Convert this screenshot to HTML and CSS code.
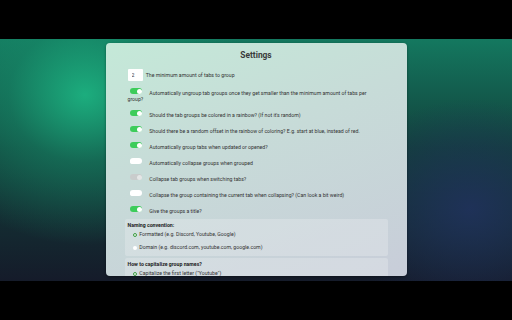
FILE: index.html
```html
<!DOCTYPE html>
<html lang="en">
<head>
    <meta charset="UTF-8">
    <meta name="viewport" content="width=device-width, initial-scale=1.0">
    <title>Settings</title>
    <link rel="stylesheet" href="styles.css">
</head>
<body>
    <div class="bar"></div>
    <div class="stage">
        <div class="panel">
            <h1>Settings</h1>
            <label class="row first">
                <input type="text" class="num" value="2"> The minimum amount of tabs to group
            </label>
            <label class="row">
                <input type="checkbox" class="switch" checked> Automatically ungroup tab groups once they get smaller than the minimum amount of tabs per group?
            </label>
            <label class="row">
                <input type="checkbox" class="switch" checked> Should the tab groups be colored in a rainbow? (If not it's random)
            </label>
            <label class="row">
                <input type="checkbox" class="switch" checked> Should there be a random offset in the rainbow of coloring? E.g. start at blue, instead of red.
            </label>
            <label class="row">
                <input type="checkbox" class="switch" checked> Automatically group tabs when updated or opened?
            </label>
            <label class="row">
                <input type="checkbox" class="switch"> Automatically collapse groups when grouped
            </label>
            <label class="row">
                <input type="checkbox" class="switch" checked disabled> Collapse tab groups when switching tabs?
            </label>
            <label class="row">
                <input type="checkbox" class="switch"> Collapse the group containing the current tab when collapsing? (Can look a bit weird)
            </label>
            <label class="row">
                <input type="checkbox" class="switch" checked> Give the groups a title?
            </label>

            <div class="box">
                <div class="legend">Naming convention:</div>
                <label class="opt"><input type="radio" name="naming" checked> Formatted (e.g. Discord, Youtube, Google)</label>
                <label class="opt"><input type="radio" name="naming"> Domain (e.g. discord.com, youtube.com, google.com)</label>
            </div>
            <div class="box">
                <div class="legend">How to capitalize group names?</div>
                <label class="opt"><input type="radio" name="caps" checked> Capitalize the first letter ("Youtube")</label>
                <label class="opt"><input type="radio" name="caps"> Keep it as it is ("youtube")</label>
            </div>
        </div>
    </div>
    <div class="bar"></div>
</body>
</html>
```

FILE: styles.css
```css
html, body {
    height: 100%;
}
body {
    margin: 0;
    background: #000;
    font-family: Roboto, "Liberation Sans", sans-serif;
    color: #333;
    display: flex;
    flex-direction: column;
}
.bar {
    height: 39px;
    background: #000;
    flex: none;
}
.stage {
    height: 242px;
    flex: none;
    background:
        radial-gradient(ellipse 170px 150px at 85px 56px, rgba(29, 182, 131, 0.9) 0%, rgba(23, 140, 105, 0.55) 45%, rgba(23, 110, 90, 0) 100%),
        radial-gradient(ellipse 130px 110px at 470px 170px, rgba(32, 50, 92, 0.9) 0%, rgba(30, 45, 80, 0) 100%),
        linear-gradient(to bottom, rgba(20, 125, 98, 0.95) 0%, rgba(16, 84, 68, 0.65) 45%, rgba(20, 26, 38, 0) 100%),
        #151b2a;
    overflow: hidden;
}
.panel {
    width: 301px;
    height: 233px;
    margin: 4px auto 0;
    box-sizing: border-box;
    padding: 7px 19px 0;
    border-radius: 4px;
    overflow: hidden;
    background: linear-gradient(160deg, #c4e9d8 0%, #c7dcd8 40%, #c8cdd9 100%);
    box-shadow: 0 1px 3px rgba(0, 0, 0, 0.4);
}
h1 {
    margin: 0 0 11px;
    font-size: 8.4px;
    line-height: 11px;
    text-align: center;
    color: #3a3a3a;
}
.row {
    display: block;
    padding: 0 9px 0 3px;
    font-size: 5.2px;
    line-height: 6px;
    margin-bottom: 10px;
}
.row.first {
    margin-bottom: 12px;
}
.num {
    width: 15px;
    height: 12px;
    box-sizing: border-box;
    margin: -3px 2px -3px 0;
    padding: 0 0 0 4px;
    border: none;
    border-radius: 1px;
    background: #fff;
    font: 5.2px Roboto, sans-serif;
    color: #333;
    vertical-align: top;
}
.switch {
    appearance: none;
    position: relative;
    width: 12.5px;
    height: 6px;
    margin: -2px 6px 0 2px;
    border-radius: 3px;
    background: #fff;
    vertical-align: top;
}
.switch::before {
    content: "";
    position: absolute;
    top: 0.5px;
    left: 0.5px;
    width: 5px;
    height: 5px;
    border-radius: 50%;
    background: #fff;
}
.switch:checked {
    background: #3dcc5b;
}
.switch:checked::before {
    left: 7px;
}
.switch:disabled {
    background: #c9cccc;
}
.switch:disabled::before {
    background: #e4e6e6;
}
.box {
    margin-bottom: 2px;
    padding: 3px 3px 6px;
    border-radius: 2px;
    background: rgba(235, 238, 242, 0.35);
}
.box:first-of-type {
    margin-top: -5px;
}
.legend {
    font-size: 5.2px;
    line-height: 6px;
    font-weight: bold;
    color: #222;
    margin-bottom: 3px;
}
.opt {
    display: block;
    font-size: 5.2px;
    line-height: 6px;
    margin-bottom: 7px;
    padding-left: 5px;
}
.opt:last-child {
    margin-bottom: 0;
}
.opt input {
    appearance: none;
    width: 4px;
    height: 4px;
    margin: 0 1.5px 0 0;
    border-radius: 50%;
    background: #fff;
    vertical-align: -1px;
}
.opt input:checked {
    border: 1px solid #3e9c44;
    box-sizing: border-box;
    background: #e8f4e8;
}
```
